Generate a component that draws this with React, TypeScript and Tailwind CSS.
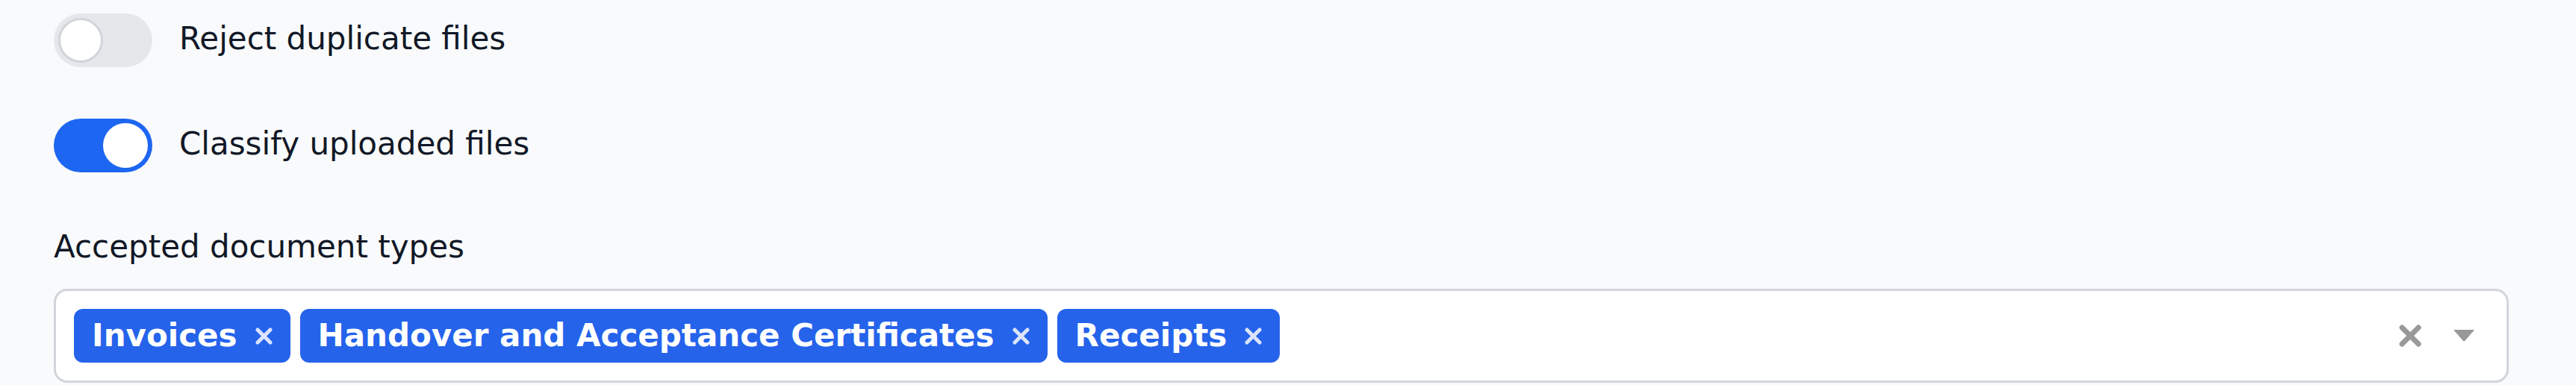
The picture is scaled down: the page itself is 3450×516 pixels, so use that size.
import { useState } from 'react';

interface ToggleRowProps {
  label: string;
  defaultOn?: boolean;
}

function ToggleRow({ label, defaultOn = false }: ToggleRowProps) {
  const [on, setOn] = useState(defaultOn);

  return (
    <div className="flex items-center gap-[36px]">
      <button
        type="button"
        onClick={() => setOn(!on)}
        className={`flex h-[72px] w-[132px] shrink-0 items-center rounded-full px-[6px] ${on ? 'justify-end bg-[#1d66f1]' : 'justify-start bg-[#e5e7eb]'}`}
      >
        <span
          className={`block h-[60px] w-[60px] rounded-full bg-white ${on ? '' : 'border-[3px] border-[#d1d5db]'}`}
        />
      </button>
      <span className="mb-[5px] text-[42px] leading-[60px] text-[#111827]">{label}</span>
    </div>
  );
}

function TagX() {
  return (
    <svg width="23" height="23" viewBox="0 0 23 23" className="shrink-0">
      <path d="M3 3 L20 20 M20 3 L3 20" stroke="#dbe4fb" strokeWidth="5" strokeLinecap="round" />
    </svg>
  );
}

export default function App() {
  const [tags, setTags] = useState(['Invoices', 'Handover and Acceptance Certificates', 'Receipts']);

  return (
    <div className="min-h-screen bg-[#f9fafb] pl-[72px] pr-[90px] pt-[18px] font-['DejaVu_Sans',sans-serif]">
      <ToggleRow label="Reject duplicate files" />
      <div className="mt-[69px]">
        <ToggleRow label="Classify uploaded files" defaultOn />
      </div>

      <div className="mt-[70px] text-[42px] leading-[60px] text-[#111827]">Accepted document types</div>

      <div className="mt-[26px] flex h-[126px] items-center rounded-[18px] border-[3px] border-[#d1d5db] bg-white pl-[24px]">
        <div className="flex flex-1 items-center gap-[13px]">
          {tags.map((tag) => (
            <div
              key={tag}
              className="flex h-[72px] items-center gap-[24px] rounded-[12px] bg-[#2563eb] px-[24px]"
            >
              <span className="text-[42px] font-bold leading-[60px] text-white">{tag}</span>
              <button type="button" onClick={() => setTags(tags.filter((t) => t !== tag))}>
                <TagX />
              </button>
            </div>
          ))}
        </div>
        <div className="flex items-center gap-[43px] pr-[43px]">
          <button type="button" onClick={() => setTags([])}>
            <svg width="30" height="30" viewBox="0 0 30 30">
              <path d="M4 4 L26 26 M26 4 L4 26" stroke="#999999" strokeWidth="7" strokeLinecap="round" />
            </svg>
          </button>
          <svg width="28" height="16" viewBox="0 0 28 16">
            <path d="M0 0 H28 L15.5 14.5 Q14 16 12.5 14.5 Z" fill="#999999" />
          </svg>
        </div>
      </div>
    </div>
  );
}
